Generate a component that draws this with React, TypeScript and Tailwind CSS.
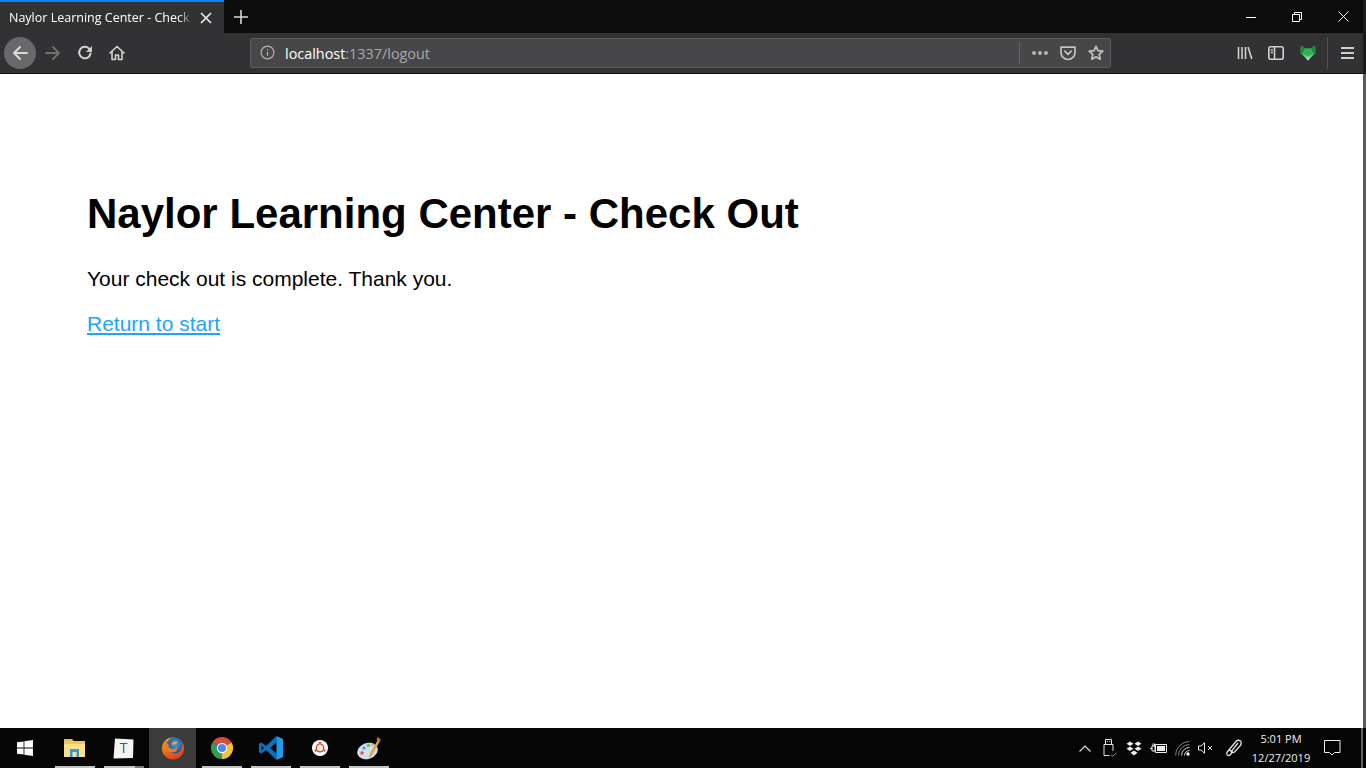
import React from "react";

const UI = { fontFamily: '"Open Sans", "Noto Sans", sans-serif' };

function Stroke({ children, size = 16, color = "#d4d4d5", sw = 2 }: { children: React.ReactNode; size?: number; color?: string; sw?: number }) {
  return (
    <svg width={size} height={size} viewBox="0 0 16 16" fill="none" stroke={color} strokeWidth={sw} strokeLinecap="round" strokeLinejoin="round">
      {children}
    </svg>
  );
}

function TaskItem({ children, active, lineClass = "bg-[#c4c4c4]" }: { children: React.ReactNode; active?: boolean; lineClass?: string }) {
  return (
    <div className="relative flex h-full w-[49px] items-center justify-center">
      {active && <div className="absolute inset-y-0 left-[1px] right-[1px] bg-[#3c3c3c]" />}
      <div className="relative flex items-center justify-center">{children}</div>
      {!active && <div className={`absolute bottom-0 left-[5px] h-[2px] w-[40px] ${lineClass}`} />}
    </div>
  );
}

export default function App() {
  return (
    <div className="relative flex h-[768px] w-[1366px] flex-col overflow-hidden bg-white">
      {/* Tab strip */}
      <div className="flex h-[33px] shrink-0 bg-[#0c0c0c]" style={UI}>
        <div className="flex h-full w-[224px] items-center border-t-2 border-[#0a84ff] bg-[#323234] pl-[9px]">
          <span className="w-[183px] overflow-hidden whitespace-nowrap pt-[1px] text-[12.5px] text-white [mask-image:linear-gradient(to_right,black_170px,transparent_183px)]">
            Naylor Learning Center - Check Out
          </span>
          <svg width="12" height="12" viewBox="0 0 12 12" className="ml-[8px]" stroke="#f0f0f0" strokeWidth="1.6"><path d="M1 1 11 11M11 1 1 11" /></svg>
        </div>
        <div className="flex w-[34px] items-center justify-center">
          <svg width="14" height="14" viewBox="0 0 14 14" stroke="#d8d8d8" strokeWidth="1.6"><path d="M7 0v14M0 7h14" /></svg>
        </div>
        <div className="flex-1" />
        <div className="flex h-full items-center">
          <div className="flex w-[46px] justify-center"><svg width="10" height="10" viewBox="0 0 10 10" stroke="#fff"><path d="M0 5.5h10" /></svg></div>
          <div className="flex w-[46px] justify-center"><svg width="10" height="10" viewBox="0 0 10 10" fill="none" stroke="#fff"><path d="M.5 2.5h7v7h-7zM2.5 2.5v-2h7v7h-2" /></svg></div>
          <div className="flex w-[46px] justify-center"><svg width="11" height="11" viewBox="0 0 11 11" stroke="#fff"><path d="M.5.5l10 10M10.5.5l-10 10" /></svg></div>
        </div>
      </div>

      {/* Nav bar */}
      <div className="flex h-[41px] shrink-0 items-center border-b border-[#0c0c0c] bg-[#323234] pb-[1px]" style={UI}>
        <div className="ml-[4px] flex h-[32px] w-[32px] items-center justify-center rounded-full bg-[#69696b]">
          <Stroke color="#d9d9d9"><path d="M15 8H2M8 2 2 8l6 6" /></Stroke>
        </div>
        <div className="ml-[1px] flex w-[32px] justify-center">
          <Stroke color="#717172"><path d="M1 8h13M8 2l6 6-6 6" /></Stroke>
        </div>
        <div className="flex w-[32px] justify-center">
          <Stroke color="#d4d4d5"><path d="M13.5 8.5A5.7 5.7 0 1 1 12 3.6L14 6" /><path d="M14.5 1.5V6.5H9.5" fill="#d4d4d5" strokeWidth="0.8" /></Stroke>
        </div>
        <div className="flex w-[32px] justify-center">
          <Stroke color="#d4d4d5" sw={1.6}><path d="M1 8 8 1.5 15 8M3 6.5V14.5H6.5V10H9.5V14.5H13V6.5" /></Stroke>
        </div>
        <div className="ml-[117px] flex h-[30px] w-[861px] items-center rounded-[2px] border border-[#5d5d5f] bg-[#474749] pr-[6px]">
          <div className="ml-[9px] flex h-[15px] w-[15px] items-center justify-center">
            <svg width="15" height="15" viewBox="0 0 15 15" fill="none" stroke="#b4b4b5" strokeWidth="1.2"><circle cx="7.5" cy="7.5" r="6.4" /><path d="M7.5 6.8v4M7.5 4v1.3" /></svg>
          </div>
          <div className="ml-[10px] pt-[3px] text-[14.4px] leading-none">
            <span className="text-white">localhost</span><span className="text-[#a9a9aa]">:1337/logout</span>
          </div>
          <div className="flex-1" />
          <div className="h-[22px] w-[1px] bg-[#656567]" />
          <div className="ml-[12px] flex w-[16px] justify-between">
            <div className="h-[4px] w-[4px] rounded-full bg-[#b4b4b5]" />
            <div className="h-[4px] w-[4px] rounded-full bg-[#b4b4b5]" />
            <div className="h-[4px] w-[4px] rounded-full bg-[#b4b4b5]" />
          </div>
          <svg width="16" height="16" viewBox="0 0 16 16" fill="none" stroke="#c2c2c3" strokeWidth="1.7" className="ml-[12px]" strokeLinecap="round" strokeLinejoin="round"><path d="M1 2.2h14v5.3a7 7 0 0 1-14 0zM4.8 6.2 8 9.3l3.2-3.1" /></svg>
          <svg width="16" height="16" viewBox="0 0 16 16" fill="none" stroke="#c2c2c3" strokeWidth="1.7" className="ml-[12px]" strokeLinejoin="round"><path d="m8 1.3 2 4.4 4.8.5-3.6 3.2 1 4.8L8 11.8l-4.2 2.4 1-4.8L1.2 6.2 6 5.7z" /></svg>
        </div>
        <div className="ml-[126px] flex w-[16px] justify-center">
          <Stroke color="#d0d0d1" sw={1.6}><path d="M1.5 2v12M5 2v12M8.5 2v12M11 2l3.8 12" strokeLinecap="butt" /></Stroke>
        </div>
        <div className="ml-[15px] flex w-[16px] justify-center">
          <svg width="16" height="14" viewBox="0 0 16 14" fill="none" stroke="#d0d0d1" strokeWidth="1.6"><rect x="0.8" y="0.8" width="14.4" height="12.400" rx="2" /><path d="M6.5 1v12M2.800 4h2M2.800 6.500h2" /></svg>
        </div>
        <div className="ml-[16px] flex w-[16px] justify-center">
          <svg width="17" height="16" viewBox="0 0 17 16">
            <path d="M1 0 5 3h7l4-3 .5 8L8.500 16 .5 8z" fill="#35ad5a" />
            <path d="M1 0 5 3 3.500 7.500.5 8zM16 0l-4 3 1.500 4.500 3 .5z" fill="#1f8a42" />
            <path d="M2.500 9 8.500 11.500 14.500 9 8.500 16z" fill="#6fcf90" />
            <path d="M7 13.500h3l-1.500 2.500z" fill="#d8f0df" />
          </svg>
        </div>
        <div className="ml-[11px] h-[32px] w-[1px] bg-[#505052]" />
        <div className="ml-[13px] flex w-[13px] flex-col gap-[3px]">
          <div className="h-[2px] bg-[#d0d0d1]" />
          <div className="h-[2px] bg-[#d0d0d1]" />
          <div className="h-[2px] bg-[#d0d0d1]" />
        </div>
      </div>

      {/* Page */}
      <main className="flex-1 bg-white pl-[87px] pt-[113px] text-black" style={{ fontFamily: '"Liberation Sans", Arial, sans-serif' }}>
        <h1 className="text-[42px] font-bold leading-[54px]">Naylor Learning Center - Check Out</h1>
        <p className="mt-[24px] text-[21px] leading-[28px]">Your check out is complete. Thank you.</p>
        <a href="#" className="mt-[17px] block w-fit text-[21px] leading-[28px] text-[#1aa7f5] underline">Return to start</a>
      </main>

      {/* Taskbar */}
      <div className="flex h-[40px] shrink-0 items-center bg-[#050505] text-white" style={UI}>
        <div className="flex h-full w-[50px] items-center justify-center">
          <svg width="16" height="16" viewBox="0 0 16 16" fill="#fff"><path d="M0 2.300 6.600 1.400V7.600H0zM7.400 1.300 16 0V7.600H7.400zM0 8.400H6.600V14.600L0 13.700zM7.400 8.400H16V16L7.400 14.700z" /></svg>
        </div>
        <TaskItem>
          <svg width="21" height="18" viewBox="0 0 21 18">
            <path d="M0 0h8l2 2.500H0z" fill="#e6bd4e" />
            <path d="M0 2h21v16H0z" fill="#fde08a" />
            <path d="M0 2h21v3H0z" fill="#f0c85a" />
            <path d="M6 10h9v8h-2.500v-5h-4v5H6z" fill="#2f9be0" />
          </svg>
        </TaskItem>
        <TaskItem lineClass="bg-[linear-gradient(to_right,#c4c4c4_31px,#777_31px)]">
          <div className="relative flex h-[21px] w-[21px] items-center justify-center">
            <svg width="21" height="21" viewBox="0 0 21 21" className="absolute inset-0"><path d="M2 .5 20.500 1.500 20 20 .5 20.500z" fill="#f4f4f4" /></svg>
            <span className="relative text-[14px] leading-none text-[#555]" style={UI}>T</span>
          </div>
        </TaskItem>
        <TaskItem active>
          <svg width="24" height="24" viewBox="0 0 24 24">
            <defs>
              <linearGradient id="ffo" x1="0.2" y1="0" x2="0.6" y2="1"><stop offset="0" stopColor="#f9b233" /><stop offset="0.55" stopColor="#ea6a1c" /><stop offset="1" stopColor="#d9421c" /></linearGradient>
              <radialGradient id="ffb" cx="0.55" cy="0.4" r="0.6"><stop offset="0" stopColor="#3b9be0" /><stop offset="1" stopColor="#1f4f9c" /></radialGradient>
            </defs>
            <circle cx="12" cy="12.500" r="11" fill="url(#ffo)" />
            <circle cx="13.500" cy="9.500" r="8" fill="url(#ffb)" />
            <path d="M6 3c-1 3 0 5 2 6-1 2 1 4 4 4 2 0 3.500-1 4.500-2.500.5 3-1.500 6-5.500 6-4 0-7-2.500-7.500-6C3.200 7.500 4 5 6 3z" fill="#ee7a1f" />
            <path d="M12 6c1.500-1 4-1 5 .5-1 0-1.500.5-2 1.500l-3.500 1c-1-1-.5-2.500.5-3z" fill="#f4a024" />
          </svg>
        </TaskItem>
        <TaskItem>
          <svg width="22" height="22" viewBox="0 0 22 22">
            <path d="M11 11 1.470 5.500A11 11 0 0 1 20.530 5.500z" fill="#dd4b3e" />
            <path d="M11 11 20.530 5.500A11 11 0 0 1 11 22z" fill="#f5c331" />
            <path d="M11 11 11 22A11 11 0 0 1 1.470 5.500z" fill="#2f9e55" />
            <circle cx="11" cy="11" r="5.200" fill="#fff" />
            <circle cx="11" cy="11" r="4.100" fill="#4a8bf0" />
          </svg>
        </TaskItem>
        <TaskItem>
          <svg width="24" height="24" viewBox="0 0 24 24">
            <path d="M17.500 0 7 10 2.500 6.500 0 7.800v8.400l2.500 1.300L7 14l10.500 10zM17.500 6.500 11 12l6.500 5.500zM2.500 9.500v5L5 12z" fill="#0a72c4" fillRule="evenodd" />
            <path d="M17.500 0 24 3v18l-6.500 3z" fill="#1e9ee8" />
          </svg>
        </TaskItem>
        <TaskItem>
          <svg width="16" height="16" viewBox="0 0 16 16">
            <circle cx="8" cy="8" r="8" fill="#fff" />
            <circle cx="8" cy="8" r="3.700" fill="none" stroke="#e0481f" strokeWidth="1.500" />
            <path d="M8 5V3M10.600 9.500l1.700 1M5.400 9.500l-1.700 1" stroke="#fff" strokeWidth="0.900" />
            <circle cx="8" cy="3" r="1.200" fill="#e0481f" />
            <circle cx="12.300" cy="10.500" r="1.200" fill="#e0481f" />
            <circle cx="3.700" cy="10.500" r="1.200" fill="#e0481f" />
          </svg>
        </TaskItem>
        <TaskItem>
          <svg width="24" height="25" viewBox="0 0 24 25">
            <ellipse cx="10.500" cy="15" rx="10.500" ry="8" transform="rotate(-20 10.500 15)" fill="#cfdfec" />
            <circle cx="5" cy="17" r="1.700" fill="#d9534f" />
            <circle cx="7" cy="12" r="1.700" fill="#4fa3dd" />
            <circle cx="11.500" cy="9.500" r="1.700" fill="#6cbf5b" />
            <circle cx="15.500" cy="8.800" r="1.500" fill="#e8b93c" />
            <path d="M21.500 3 13 17l-1.500 6 4-4.500L23 5z" fill="#e0a548" />
            <path d="M20.500 1 24 3.500 22.500 6 19.500 4z" fill="#b07a38" />
          </svg>
        </TaskItem>

        <div className="flex-1" />
        <div className="flex h-full items-center">
          <svg width="12" height="7" viewBox="0 0 12 7" fill="none" stroke="#e4e4e4" strokeWidth="1.100" className="mr-[12px]"><path d="M.5 6.500 6 1l5.500 5.500" /></svg>
          <svg width="14" height="18" viewBox="0 0 14 18" fill="none" stroke="#e4e4e4" className="mr-[9px]"><path d="M2.500.5h6v5h-6zM1 5.500h9V12M1 5.500V16.500H6.500" /><path d="M3.800 2.500h1M6.200 2.500h1" /><path d="M8 16l2 1.200 3.500-3.700" stroke="#8a8a8a" /></svg>
          <svg width="16" height="15" viewBox="0 0 16 15" fill="#eeeeee" className="mr-[8px]"><path d="M4 .5 7.500 2.800 4 5.100.5 2.800zM12 .5 15.500 2.800 12 5.100 8.500 2.800zM4 5.500 7.500 7.800 4 10.100.5 7.800zM12 5.500 15.500 7.800 12 10.100 8.500 7.800zM8 9.500 11.500 11.800 8 14.500 4.500 11.800z" /></svg>
          <svg width="17" height="12" viewBox="0 0 17 12" fill="none" stroke="#eeeeee" className="mr-[10px]"><path d="M5.500 2.500h11v8h-11z" /><path d="M7 4h8v5H7z" fill="#eeeeee" stroke="none" /><path d="M0 6.500h2M2 4h3v5H2zM3 1.500V4M4.500 1.500V4" /></svg>
          <svg width="15" height="15" viewBox="0 0 15 15" fill="none" stroke="#cfcfcf" className="mr-[7px] ml-[-2px]"><path d="M.5 14.500A14 14 0 0 1 14.500.5M3.500 14.500A11 11 0 0 1 14.500 3.500" opacity=".6" /><path d="M6.500 14.500A8 8 0 0 1 14.500 6.500M9.500 14.500a5 5 0 0 1 5-5" /><circle cx="13" cy="13" r="1.700" fill="#fff" stroke="none" /></svg>
          <svg width="16" height="12" viewBox="0 0 16 12" fill="none" stroke="#e4e4e4" className="mr-[12px] ml-[1px]"><path d="M.5 4h2.500L6.500.800V11.200L3 8H.5zM10 4l4 4M14 4l-4 4" /></svg>
          <svg width="17" height="18" viewBox="0 0 17 18" fill="none" stroke="#e4e4e4" strokeWidth="1.300" className="mr-[5px]"><path d="M1 14c0-2.500 2.500-3.500 4-2s-.5 4.500-2.500 4.500S0 14 2 12L10 2.500c1.500-1.800 4-1.500 4.800 0S15 6 13.500 7.500L8.500 13c-1 1-3 .5-2.500-1.500L12 4" /></svg>
          <div className="mr-[10px] flex w-[66px] flex-col items-center text-[11px] leading-[19px] text-[#f0f0f0]">
            <span>5:01 PM</span>
            <span>12/27/2019</span>
          </div>
          <svg width="17" height="16" viewBox="0 0 17 16" fill="none" stroke="#f0f0f0" className="mr-[25px]"><path d="M.5.500h15.500v12H10.500L8 15l-2.500-2.500H.5z" /></svg>
        </div>
      </div>

      {/* Window edge and scrollbar sliver over the content */}
      <div className="absolute right-0 top-0 h-[74px] w-[3px] bg-[#1b1b1b]" />
      <div className="absolute right-0 top-[74px] h-[654px] w-[3px] bg-[#5a5a5a]" />
      <div className="absolute bottom-0 right-[3px] h-[40px] w-[2px] bg-[#5f5f5f]" />
    </div>
  );
}
